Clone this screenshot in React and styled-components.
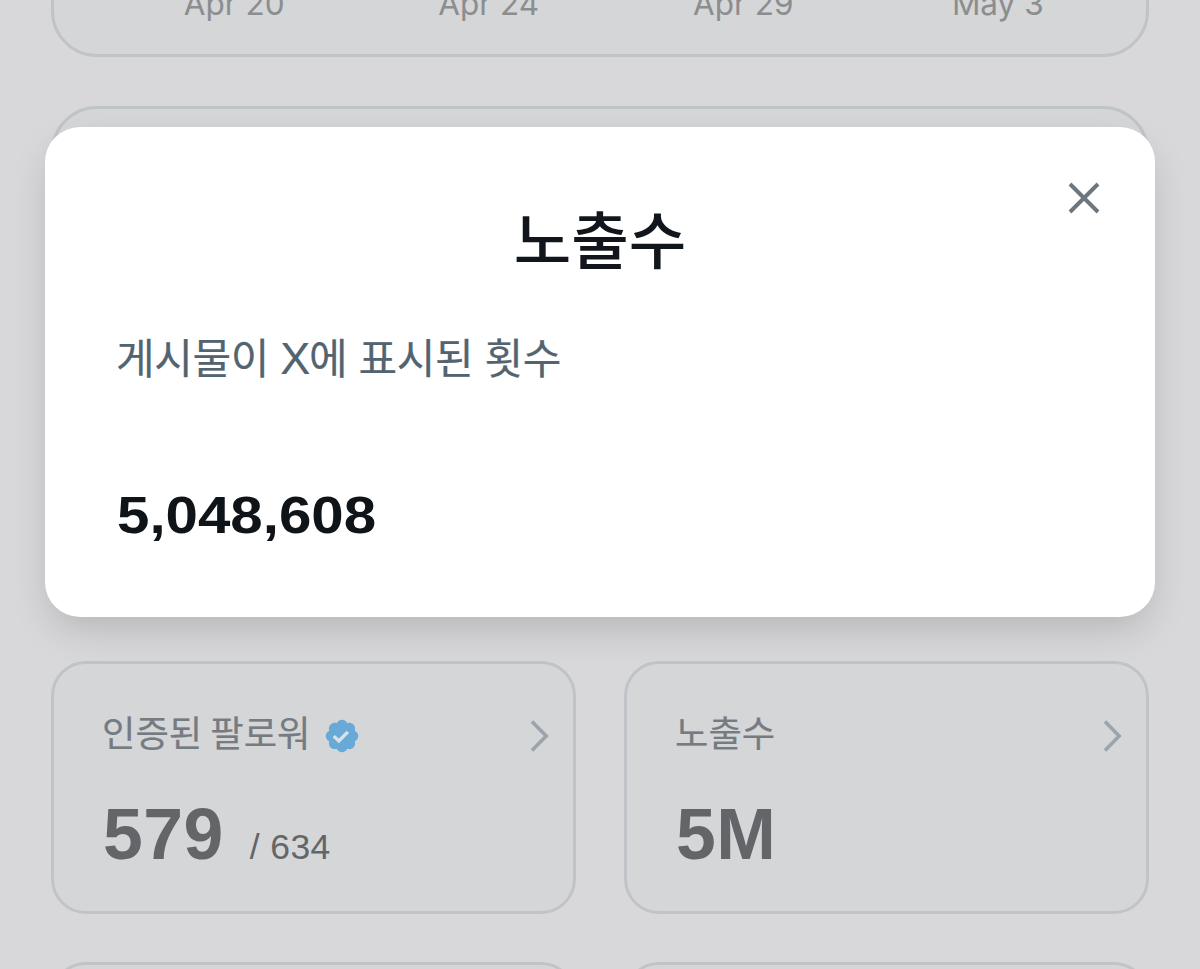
import React from "react";
import styled, { createGlobalStyle } from "styled-components";

const AXIS_LABELS = ["Apr 20", "Apr 24", "Apr 29", "May 3"];

const STATS = [
  { id: 1, label: "인증된 팔로워", value: "579", total: "/ 634", verified: true },
  { id: 2, label: "노출수", value: "5M" },
];

const VerifiedIcon = () => (
  <svg width="38" height="38" viewBox="0 0 22 22" aria-hidden="true">
    <path
      fill="#69a9d8"
      d="M20.396 11c-.018-.646-.215-1.275-.57-1.816-.354-.54-.852-.972-1.438-1.246.223-.607.27-1.264.14-1.897-.131-.634-.437-1.218-.882-1.687-.47-.445-1.053-.75-1.687-.882-.633-.13-1.29-.083-1.897.14-.273-.587-.704-1.086-1.245-1.44S11.647 1.62 11 1.604c-.646.017-1.273.213-1.813.568s-.969.854-1.24 1.44c-.608-.223-1.267-.272-1.902-.14-.635.13-1.22.436-1.69.882-.445.47-.749 1.055-.878 1.688-.13.633-.08 1.29.144 1.896-.587.274-1.087.705-1.443 1.245-.356.54-.555 1.17-.574 1.817.02.647.218 1.276.574 1.817.356.54.856.972 1.443 1.245-.224.606-.274 1.263-.144 1.896.13.634.433 1.218.877 1.688.47.443 1.054.747 1.687.878.633.132 1.29.084 1.897-.136.274.586.705 1.084 1.246 1.439.54.354 1.17.551 1.816.569.647-.016 1.276-.213 1.817-.567s.972-.854 1.245-1.44c.604.239 1.266.296 1.903.164.636-.132 1.22-.447 1.68-.907.46-.46.776-1.044.908-1.681s.075-1.299-.165-1.903c.586-.274 1.084-.705 1.439-1.246.354-.54.551-1.17.569-1.816z"
    />
    <path
      d="M6.2 11.1l3 2.8 5.2-5.3"
      fill="none"
      stroke="#dbe3ea"
      strokeWidth="1.9"
    />
  </svg>
);

const ChevronIcon = () => (
  <svg width="22" height="34" viewBox="0 0 22 34" aria-hidden="true">
    <path
      d="M3 2.5L17.2 17L3 31.5"
      fill="none"
      stroke="#9ba4ad"
      strokeWidth="3.6"
    />
  </svg>
);

const CloseIcon = () => (
  <svg width="32" height="32" viewBox="0 0 32 32" aria-hidden="true">
    <path
      d="M2 2L30 30M30 2L2 30"
      fill="none"
      stroke="#6d757d"
      strokeWidth="3.9"
    />
  </svg>
);

const App = () => {
  return (
    <>
      <GlobalStyle />
      <Page>
        <ChartCard>
          {AXIS_LABELS.map((label) => (
            <AxisLabel key={label}>{label}</AxisLabel>
          ))}
        </ChartCard>
        <PanelCard />
        <StatGrid>
          {STATS.map((stat) => (
            <StatCard key={stat.id}>
              <StatHeader>
                <StatLabel>{stat.label}</StatLabel>
                {stat.verified && <VerifiedIcon />}
                <Arrow>
                  <ChevronIcon />
                </Arrow>
              </StatHeader>
              <StatValues>
                <StatValue>{stat.value}</StatValue>
                {stat.total && <StatTotal>{stat.total}</StatTotal>}
              </StatValues>
            </StatCard>
          ))}
          <StatCard />
          <StatCard />
        </StatGrid>
        <Modal role="dialog">
          <CloseButton aria-label="닫기">
            <CloseIcon />
          </CloseButton>
          <Title>노출수</Title>
          <Description>
            게시물이 <Brand>X</Brand>에 표시된 횟수
          </Description>
          <Count>5,048,608</Count>
        </Modal>
      </Page>
    </>
  );
};

const GlobalStyle = createGlobalStyle`
  * {
    box-sizing: border-box;
    margin: 0;
    padding: 0;
  }
  body {
    background: #d8d8da;
    font-family: "Liberation Sans", "Noto Sans CJK KR", sans-serif;
    overflow: hidden;
  }
`;

const Page = styled.main`
  position: relative;
  width: 1200px;
  height: 969px;
  padding: 0 51px;
  display: flex;
  flex-direction: column;
  gap: 49px;
  overflow: hidden;
`;

const Card = styled.section`
  flex-shrink: 0;
  background: #d4d6d8;
  border: 3px solid #c0c4c8;
  border-radius: 46px;
`;

const ChartCard = styled(Card)`
  display: grid;
  grid-template-columns: repeat(4, 254.5px);
  justify-content: end;
  align-items: end;
  height: 157px;
  margin-top: -100px;
  padding: 0 21px 30px 0;
`;

const AxisLabel = styled.span`
  text-align: center;
  font-family: Inter, sans-serif;
  font-size: 31.5px;
  line-height: 40px;
  color: #8c8d8f;
`;

const PanelCard = styled(Card)`
  height: 506px;
`;

const StatGrid = styled.div`
  display: grid;
  grid-template-columns: 1fr 1fr;
  grid-auto-rows: 253px;
  gap: 48px;
`;

const StatCard = styled(Card)`
  border-radius: 35px;
  padding: 45px 22px 0 48px;
`;

const StatHeader = styled.div`
  display: flex;
  align-items: center;
  height: 54px;
`;

const StatLabel = styled.h3`
  font-size: 36.3px;
  font-weight: 400;
  line-height: 54px;
  word-spacing: -2px;
  margin: -3px 13px 0 0;
  color: #767b81;
  -webkit-text-stroke: 0.2px #767b81;
`;

const Arrow = styled.span`
  display: flex;
  margin-left: auto;
`;

const StatValues = styled.div`
  display: flex;
  align-items: baseline;
  gap: 26px;
  margin: 31px 0 0 1px;
`;

const StatValue = styled.strong`
  font-size: 71.5px;
  line-height: 80px;
  letter-spacing: 0.5px;
  color: #646568;
`;

const StatTotal = styled.span`
  font-size: 35.5px;
  letter-spacing: 0.4px;
  color: #646568;
`;

const Modal = styled.div`
  position: absolute;
  top: 127px;
  left: 45px;
  width: 1110px;
  height: 490px;
  padding: 73px 72px;
  background: #fff;
  border-radius: 35px;
  box-shadow: 0 16px 38px -6px rgba(0, 0, 0, 0.17);
`;

const CloseButton = styled.button`
  position: absolute;
  top: 55px;
  right: 55px;
  display: flex;
  border: none;
  background: none;
  cursor: pointer;
`;

const Title = styled.h2`
  text-align: center;
  font-size: 62.5px;
  font-weight: 500;
  line-height: 84px;
  color: #10161b;
`;

const Description = styled.p`
  margin: 44px 0 0 -1px;
  font-size: 42px;
  line-height: 64px;
  letter-spacing: -0.4px;
  color: #536471;
  -webkit-text-stroke: 0.2px #536471;
`;

const Brand = styled.span`
  font-size: 45px;
  line-height: 1;
  letter-spacing: -1.2px;
`;

const Count = styled.p`
  margin-top: 91px;
  font-size: 52px;
  font-weight: 700;
  line-height: 64px;
  transform: scaleX(1.12);
  transform-origin: left;
  color: #0f1419;
`;

export default App;
